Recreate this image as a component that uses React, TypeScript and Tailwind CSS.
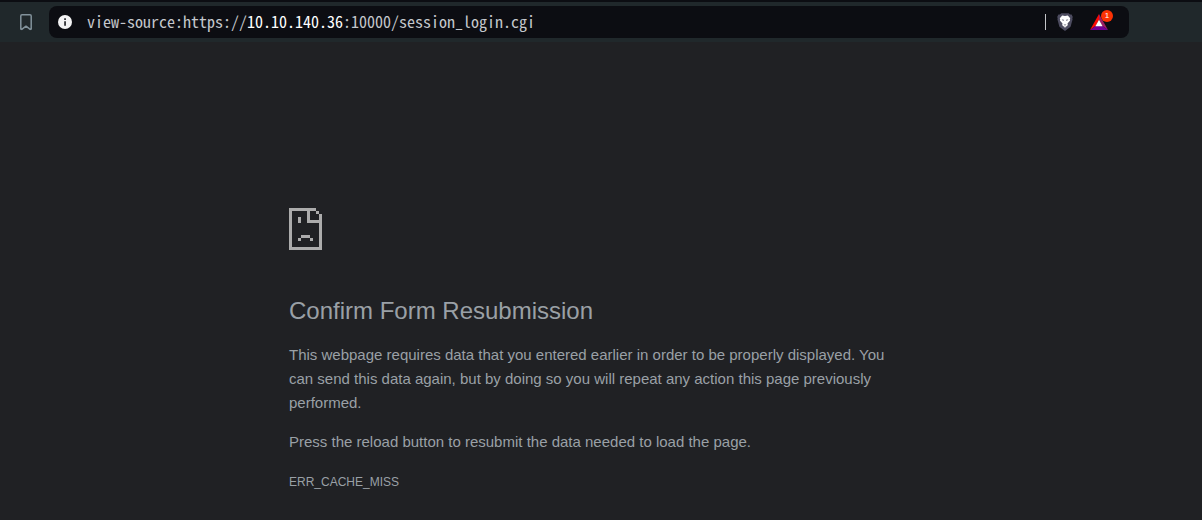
import { useState } from "react";

function BookmarkIcon() {
  return (
    <svg width="14" height="18" viewBox="0 0 14 18" fill="none" stroke="#82929b" strokeWidth="1.5" strokeLinejoin="round" aria-hidden="true">
      <path d="M3 1.7h8q1.2 0 1.2 1.3v13l-1 .4L7 13.2l-4.2 3.2-1-.4V3q0-1.3 1.2-1.3z" />
    </svg>
  );
}

function InfoIcon() {
  return (
    <svg width="14" height="14" viewBox="0 0 14 14" aria-hidden="true">
      <circle cx="7" cy="7" r="7" fill="#f4f4f5" />
      <path d="M6.2 3.3h1.7v1.6H6.2zM6.2 6.2h1.7v4.5H6.2z" fill="#26272c" />
    </svg>
  );
}

function ShieldIcon() {
  return (
    <svg width="16" height="18" viewBox="0 0 16 18" aria-hidden="true">
      <path d="M4.3.3h7.4l1.3 1.3 1.6-.1 1.2 2.6-.5 1.2.3 1-1.8 6.7q-.3 1-1.2 1.6L8 18l-4.6-3.4q-.9-.6-1.2-1.6L.4 6.3l.3-1-.5-1.2 1.2-2.6 1.6.1z" fill="#4d4c60" />
      <path d="M5.2 2.6l2.8.4 2.8-.4 2.4 2.7-.4 1.4.3.8-2.6 3.1.3 1.3-1 1.3-1 .2L8 14.9l-.8-1.5-1-.2-1-1.3.3-1.3-2.6-3.1.3-.8-.4-1.4z" fill="#fff" />
      <path d="M4.6 6.4l2.3.4-.6 1.1zM11.4 6.4l-2.3.4.6 1.1zM6.6 11l1.4.7 1.4-.7-1.4 1.8z" fill="#4d4c60" />
    </svg>
  );
}

function RewardsIcon() {
  return (
    <svg width="18" height="16" viewBox="0 0 18 16" aria-hidden="true">
      <path d="M9 0v6L5.6 12 0 16z" fill="#fb0a05" />
      <path d="M9 0l9 16-5.6-4L9 6z" fill="#9e1f63" />
      <path d="M0 16l5.6-4h6.8l5.6 4z" fill="#710094" />
      <path d="M9 5.8l3.6 6.4H5.4z" fill="#fff" />
    </svg>
  );
}

function SadPageIcon() {
  return (
    <svg width="33" height="42" viewBox="0 0 11 14" fill="#acacac" shapeRendering="crispEdges" aria-hidden="true">
      <path d="M0 0h9v1H7v3h3V2h1v12H0zM1 1v12h9V5H6V1z" fillRule="evenodd" />
      <path d="M9 1h1v1H9zM3 3h1v2H3zM4 9h3v1H4zM3 10h1v1H3zM7 10h1v1H7z" />
    </svg>
  );
}

function AddressField() {
  const [url, setUrl] = useState("view-source:https://10.10.140.36:10000/session_login.cgi");
  const parts = url.match(/^(.*?:\/\/)([^:/]*)(.*)$/) ?? ["", "", url, ""];

  return (
    <div className="relative h-[30px] min-w-0 flex-1 self-start font-['Noto_Sans_Mono_CJK_SC','Liberation_Mono',monospace] text-base leading-[30px]">
      <input
        aria-label="Address"
        spellCheck={false}
        value={url}
        onChange={(event) => setUrl(event.target.value)}
        className="peer h-full w-full bg-transparent text-transparent outline-none focus:text-[#c4c7cc]"
      />
      <div aria-hidden="true" className="pointer-events-none absolute inset-0 overflow-hidden whitespace-nowrap text-[#c4c7cc] peer-focus:invisible">
        {parts[1]}
        <span className="text-white">{parts[2]}</span>
        {parts[3]}
      </div>
    </div>
  );
}

export default function App() {
  return (
    <div className="min-h-screen bg-[#202124] font-['Liberation_Sans',Arial,sans-serif] text-[#9aa0a6]">
      <header className="flex h-[42px] items-center border-t-2 border-[#0c0d12] bg-[#20282b] pl-[19px] pr-[73px]">
        <button type="button" aria-label="Bookmark this page" className="mr-4">
          <BookmarkIcon />
        </button>
        <div className="flex h-8 min-w-0 flex-1 items-center rounded-lg bg-[#0c0d12] pl-[9px] pr-[21px]">
          <button type="button" aria-label="Site information" className="mr-[15px]">
            <InfoIcon />
          </button>
          <AddressField />
          <span className="mr-[11px] h-4 w-px bg-[#c4c5c8]" />
          <button type="button" aria-label="Shields">
            <ShieldIcon />
          </button>
          <button type="button" aria-label="Rewards" className="relative ml-[17px]">
            <RewardsIcon />
            <span className="absolute -top-1 left-[11px] flex h-3 w-3 items-center justify-center rounded-full bg-[#fb3204] text-[8px] leading-3 text-white">
              1
            </span>
          </button>
        </div>
      </header>
      <main className="mx-auto max-w-[624px] pr-6 pt-[166px]">
        <SadPageIcon />
        <h1 className="mt-[46px] text-2xl leading-[30px]">Confirm Form Resubmission</h1>
        <p className="mt-[17px] text-[15px] leading-6">
          This webpage requires data that you entered earlier in order to be properly displayed. You can send this data
          again, but by doing so you will repeat any action this page previously performed.
        </p>
        <p className="mt-[15px] text-[15px] leading-6">
          Press the reload button to resubmit the data needed to load the page.
        </p>
        <p className="mt-4 text-xs leading-6">ERR_CACHE_MISS</p>
      </main>
    </div>
  );
}
